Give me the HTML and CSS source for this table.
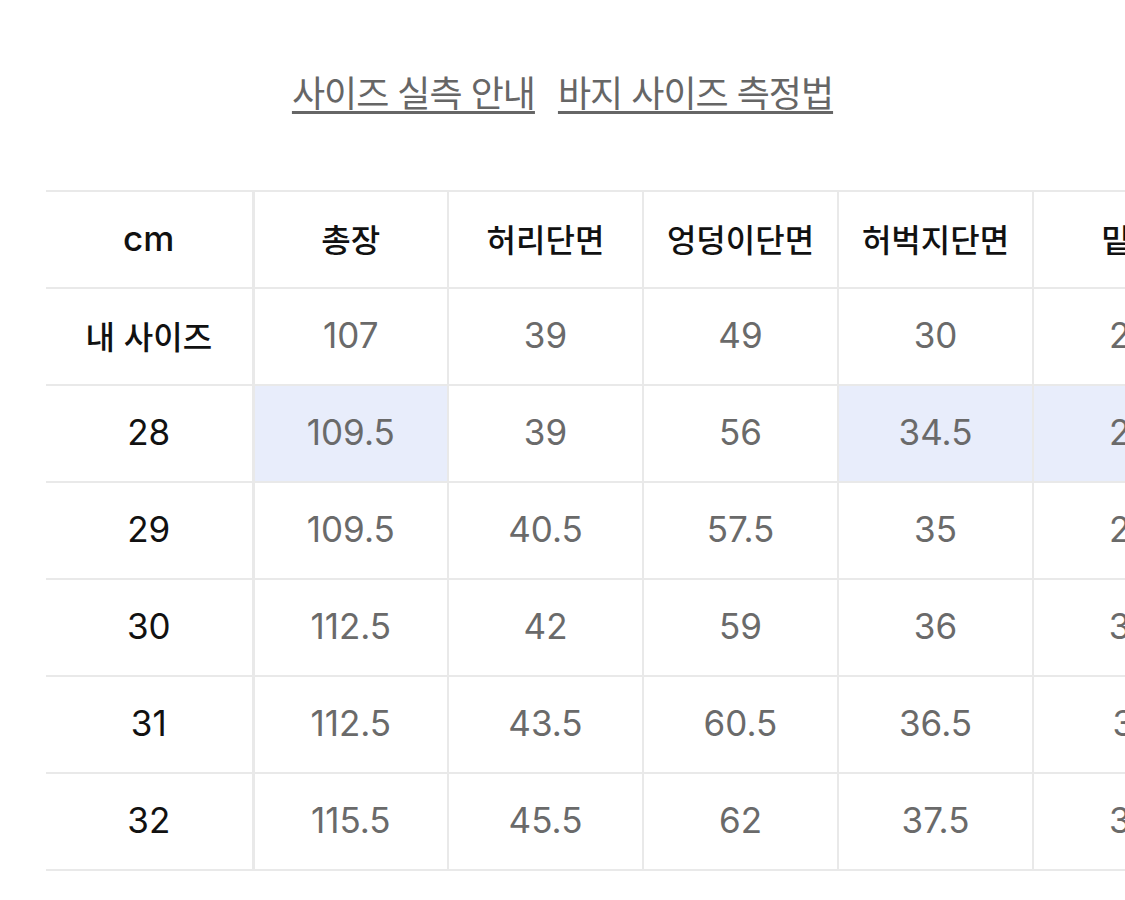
FILE: index.html
```html
<!DOCTYPE html>
<html lang="ko">
<head>
<meta charset="utf-8">
<title>사이즈 실측</title>
<link rel="stylesheet" href="styles.css">
</head>
<body>
<div class="page">
  <nav class="links">
    <a class="link" href="#">사이즈 실측 안내</a>
    <a class="link" href="#">바지 사이즈 측정법</a>
  </nav>
  <div class="table-wrap">
    <table class="size-table">
      <colgroup>
        <col class="col-first">
        <col class="col"><col class="col"><col class="col"><col class="col"><col class="col"><col class="col">
      </colgroup>
      <thead>
        <tr>
          <th class="first">cm</th>
          <th>총장</th>
          <th>허리단면</th>
          <th>엉덩이단면</th>
          <th>허벅지단면</th>
          <th>밑위</th>
          <th>밑단단면</th>
        </tr>
      </thead>
      <tbody>
        <tr>
          <td class="first kr">내 사이즈</td>
          <td>107</td><td>39</td><td>49</td><td>30</td><td>28</td><td>20</td>
        </tr>
        <tr>
          <td class="first">28</td>
          <td class="hl">109.5</td><td>39</td><td>56</td><td class="hl">34.5</td><td class="hl">28</td><td>20</td>
        </tr>
        <tr>
          <td class="first">29</td>
          <td>109.5</td><td>40.5</td><td>57.5</td><td>35</td><td>29</td><td>20</td>
        </tr>
        <tr>
          <td class="first">30</td>
          <td>112.5</td><td>42</td><td>59</td><td>36</td><td>30</td><td>21</td>
        </tr>
        <tr>
          <td class="first">31</td>
          <td>112.5</td><td>43.5</td><td>60.5</td><td>36.5</td><td>31</td><td>21</td>
        </tr>
        <tr>
          <td class="first">32</td>
          <td>115.5</td><td>45.5</td><td>62</td><td>37.5</td><td>32</td><td>22</td>
        </tr>
      </tbody>
    </table>
  </div>
</div>
</body>
</html>
```

FILE: styles.css
```css
html, body {
  margin: 0;
  padding: 0;
  background: #ffffff;
}

.page {
  width: 1125px;
  height: 900px;
  overflow: hidden;
  font-family: "Inter", "Noto Sans CJK KR", sans-serif;
}

.links {
  display: flex;
  justify-content: center;
  gap: 23px;
  padding-top: 67px;
  font-family: "Noto Sans CJK KR", sans-serif;
  font-size: 36px;
  line-height: 48px;
}

.link {
  color: #666666;
  text-decoration: underline;
  text-decoration-thickness: 3px;
  text-underline-offset: 4px;
  letter-spacing: -1px;
}

.table-wrap {
  margin-top: 75px;
  padding-left: 46px;
  overflow: hidden;
}

.size-table {
  table-layout: fixed;
  width: 1377px;
  border-collapse: collapse;
}

.col-first { width: 207px; }
.col { width: 195px; }

.size-table tr {
  height: 97px;
}

.size-table th,
.size-table td {
  border: 2px solid #e9e9e9;
  padding: 0 0 4px 0;
  text-align: center;
  vertical-align: middle;
  white-space: nowrap;
}

.size-table th {
  font-family: "Noto Sans CJK KR", sans-serif;
  font-size: 32px;
  font-weight: 500;
  color: #111111;
}

.size-table th.first {
  font-family: "Inter", sans-serif;
  font-size: 35px;
  font-weight: 500;
}

.size-table td {
  font-size: 35px;
  color: #6a6a6a;
}

.size-table .first {
  border-left: none;
  border-right: 3px solid #e9e9e9;
  color: #111111;
}

.size-table td.first {
  font-size: 35px;
}

.size-table td.kr {
  font-family: "Noto Sans CJK KR", sans-serif;
  font-size: 32px;
  font-weight: 500;
}

.size-table td.hl {
  background: #e8edfb;
}
```
